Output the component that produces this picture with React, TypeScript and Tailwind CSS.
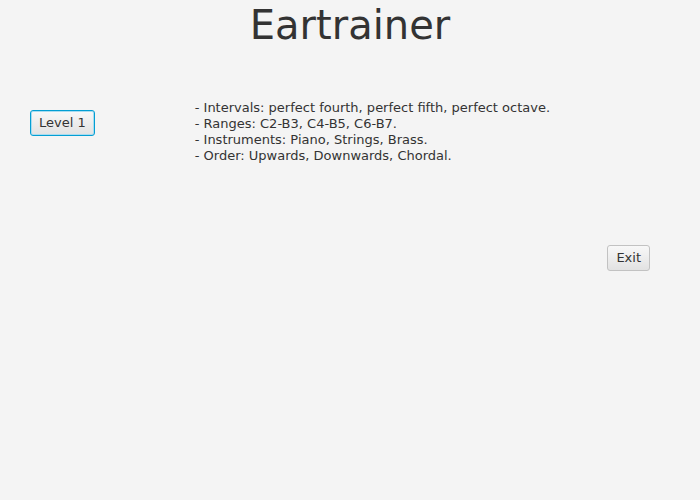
export default function App() {
  const lines = [
    "- Intervals: perfect fourth, perfect fifth, perfect octave.",
    "- Ranges: C2-B3, C4-B5, C6-B7.",
    "- Instruments: Piano, Strings, Brass.",
    "- Order: Upwards, Downwards, Chordal.",
  ];
  return (
    <div
      className="w-[700px] h-[500px] bg-[#f4f4f4] text-[#333333] flex flex-col"
      style={{ fontFamily: '"DejaVu Sans", sans-serif' }}
    >
      <h1 className="text-center text-[40px] leading-[48px] pt-[1px]">Eartrainer</h1>

      <div className="flex items-start mt-[50px]">
        <button className="ml-[30px] mt-[11px] h-[26px] px-[8px] text-[13px] rounded-[3px] border border-[#039ed3] bg-gradient-to-b from-[#f8f8f8] to-[#e2e2e2] shadow-[inset_0_0_0_1px_#a8dcf0]">
          Level 1
        </button>
        <div className="ml-[100px] mt-[1px] text-[13px] leading-[16px]">
          {lines.map((l) => (
            <div key={l}>{l}</div>
          ))}
        </div>
      </div>

      <div className="flex justify-end mt-[81px] pr-[50px]">
        <button className="h-[26px] px-[8px] text-[13px] rounded-[3px] border border-[#c2c2c2] bg-gradient-to-b from-[#f8f8f8] to-[#e2e2e2]">
          Exit
        </button>
      </div>
    </div>
  );
}
